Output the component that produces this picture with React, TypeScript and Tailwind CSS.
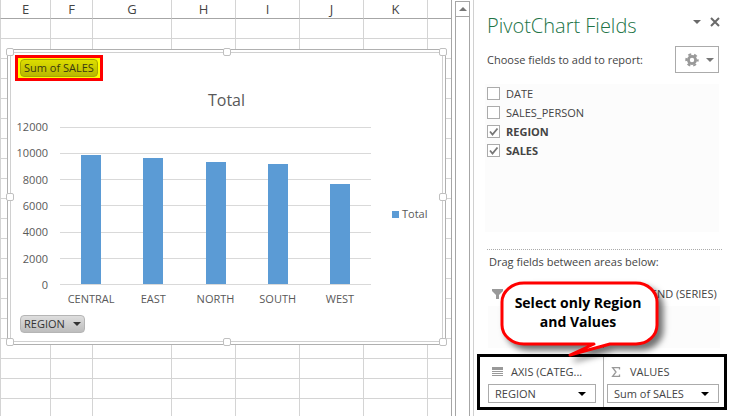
import { useState } from 'react';
import clsx from 'clsx';

const columns = [
  { name: 'E', width: 'w-[50px]' },
  { name: 'F', width: 'w-[42px]' },
  { name: 'G', width: 'w-[79px]' },
  { name: 'H', width: 'w-16' },
  { name: 'I', width: 'w-16' },
  { name: 'J', width: 'w-16' },
  { name: 'K', width: 'w-16' },
  { name: '', width: '' },
];

const rows = Array.from({ length: 20 }, (_, i) => i);

const AXIS_MAX = 12000;
const ticks = [12000, 10000, 8000, 6000, 4000, 2000, 0];

const totals = [
  { region: 'CENTRAL', value: 9860 },
  { region: 'EAST', value: 9640 },
  { region: 'NORTH', value: 9330 },
  { region: 'SOUTH', value: 9180 },
  { region: 'WEST', value: 7650 },
];

const handles = [
  '-left-[2px] -top-[2px]',
  'left-1/2 -ml-1 -top-[2px]',
  '-right-[2px] -top-[2px]',
  '-left-[2px] top-1/2 -mt-1',
  '-right-[2px] top-1/2 -mt-1',
  '-left-[2px] -bottom-[2px]',
  'left-1/2 -ml-1 -bottom-[2px]',
  '-right-[2px] -bottom-[2px]',
];

function Arrow({ className }: { className?: string }) {
  return (
    <svg viewBox="0 0 8 4" className={clsx('h-1 w-2 shrink-0', className)} fill="currentColor">
      <path d="M0 0h8L4 4z" />
    </svg>
  );
}

function Sheet() {
  return (
    <table className="w-full table-fixed border-separate border-spacing-0">
      <thead>
        <tr>
          {columns.map((col) => (
            <th
              key={col.name}
              className={clsx(
                'h-[19px] border-b border-l border-b-[#a6a6a6] border-l-[#d4d4d4] p-0 text-[13px] leading-4 font-normal text-[#444]',
                col.width
              )}
            >
              {col.name}
            </th>
          ))}
        </tr>
      </thead>
      <tbody>
        {rows.map((row) => (
          <tr key={row}>
            {columns.map((col) => (
              <td key={col.name} className="h-5 border-b border-l border-[#d4d4d4] p-0" />
            ))}
          </tr>
        ))}
      </tbody>
    </table>
  );
}

function PivotChart() {
  return (
    <div className="absolute top-[49px] right-[5px] left-[7px] border border-[#b0b0b0] bg-white p-[2px]">
      <div className="border border-[#d0d0d0] pb-2 pl-1 text-[11px] leading-4 text-[#595959]">
        <div className="mt-[2px] inline-flex h-[26px] items-center border-3 border-[#ff0000] bg-[#ffff00] px-[2px] align-top">
          <button className="h-[18px] rounded border border-[#a8a800] bg-linear-to-b from-[#dddd00] to-[#b8b800] px-[3px] leading-4 whitespace-nowrap text-[#3a3a10]">
            Sum of SALES
          </button>
        </div>

        <h2 className="mt-[7px] -ml-1 text-center text-[16px] leading-6">Total</h2>

        <div className="mt-[7px] flex">
          <div className="flex w-[33px] flex-col justify-between text-right">
            {ticks.map((tick) => (
              <span key={tick} className="leading-4">
                {tick}
              </span>
            ))}
          </div>

          <div className="ml-3 flex-1 py-2">
            <div className="relative h-[158px]">
              <div className="flex h-full flex-col justify-between">
                {ticks.map((tick) => (
                  <div key={tick} className="h-px bg-[#d9d9d9]" />
                ))}
              </div>
              <div className="absolute inset-x-0 top-0 bottom-px flex items-end">
                {totals.map((t) => (
                  <div key={t.region} className="flex h-full flex-1 items-end justify-center">
                    <div
                      className="w-5 bg-[#5b9bd5]"
                      style={{ height: `${(t.value / AXIS_MAX) * 100}%` }}
                    />
                  </div>
                ))}
              </div>
            </div>
          </div>

          <div className="flex w-[71px] items-center gap-[3px] pt-4 pl-[21px]">
            <span className="h-[7px] w-[7px] bg-[#5b9bd5]" />
            Total
          </div>
        </div>

        <div className="-mt-[2px] mr-[71px] ml-[45px] flex">
          {totals.map((t) => (
            <span key={t.region} className="flex-1 text-center">
              {t.region}
            </span>
          ))}
        </div>

        <button className="mt-2 ml-[5px] flex h-[18px] items-center gap-2 rounded border border-[#b5b5b5] bg-linear-to-b from-[#dedede] to-[#bdbdbd] px-[3px] text-[#333]">
          REGION
          <Arrow />
        </button>
      </div>

      {handles.map((place) => (
        <span
          key={place}
          className={clsx('absolute h-2 w-2 rounded-[2px] border border-[#c0c0c0] bg-white', place)}
        />
      ))}
    </div>
  );
}

function ScrollBar() {
  return (
    <div className="flex w-[22px] shrink-0 flex-col border-l border-[#a6a6a6] pt-px pr-[3px] pl-[3px]">
      <button
        aria-label="Scroll up"
        className="flex h-4 items-center justify-center border border-[#a6a6a6] text-[#777]"
      >
        <Arrow className="rotate-180" />
      </button>
      <div className="flex-1 border-x border-[#a6a6a6]" />
    </div>
  );
}

function FieldItem({ name, initial }: { name: string; initial: boolean }) {
  const [checked, setChecked] = useState(initial);

  return (
    <label className={clsx('flex h-[19px] items-center gap-[6px]', checked && 'font-bold')}>
      <span className="relative flex">
        <input
          type="checkbox"
          checked={checked}
          onChange={() => setChecked(!checked)}
          className="h-[13px] w-[13px] appearance-none border border-[#ababab] bg-white"
        />
        {checked && (
          <svg
            viewBox="0 0 13 13"
            className="pointer-events-none absolute inset-0"
            fill="none"
            stroke="#777"
            strokeWidth="1.8"
          >
            <path d="M3 6.5 5.5 9.5 10.5 3.5" />
          </svg>
        )}
      </span>
      {name}
    </label>
  );
}

function AreaHeading({ icon, label }: { icon: React.ReactNode; label?: string }) {
  return (
    <div className="flex h-6 items-center gap-2 pl-1 whitespace-nowrap">
      <span className="flex w-[11px] text-[#999]">{icon}</span>
      {label}
    </div>
  );
}

function AreaButton({ label }: { label: string }) {
  return (
    <button className="flex h-[19px] w-full items-center justify-between border border-[#ababab] bg-white pr-[9px] pl-[6px] whitespace-nowrap">
      {label}
      <Arrow className="text-black" />
    </button>
  );
}

const funnelIcon = (
  <svg viewBox="0 0 11 10" className="h-[10px] w-[11px]" fill="currentColor">
    <path d="M0 0h11v2L7 6v4H4V6L0 2z" />
  </svg>
);

const columnsIcon = (
  <svg viewBox="0 0 11 10" className="h-[10px] w-[11px]" fill="currentColor">
    <path d="M0 0h4v10H0zM5 0h1v10H5zM7 0h1v10H7zM9 0h1v10H9z" />
  </svg>
);

const rowsIcon = (
  <svg viewBox="0 0 11 10" className="h-[10px] w-[11px]" fill="currentColor">
    <path d="M0 0h11v3H0zM0 4h11v1H0zM0 6h11v1H0zM0 8h11v1H0z" />
  </svg>
);

const sigmaIcon = (
  <svg viewBox="0 0 11 10" className="h-[10px] w-[11px]" fill="none" stroke="currentColor">
    <path d="M8.5 2.5v-2h-7L5 5 1.500 9.500h7v-2" strokeWidth="1.3" />
  </svg>
);

function Callout() {
  return (
    <div className="absolute top-[280px] left-[24px] h-20 w-[170px]">
      <svg
        viewBox="0 0 170 80"
        className="absolute inset-0 overflow-visible drop-shadow-[5px_5px_3px_rgba(0,0,0,0.55)]"
      >
        <path
          d="M26 3H138A21 19 0 0 1 159 22V45A21 19 0 0 1 138 64H112L72 75 96 64H26A22 19 0 0 1 4 45V22A22 19 0 0 1 26 3Z"
          fill="#fff"
          stroke="#ff0000"
          strokeWidth="3"
          strokeLinejoin="round"
        />
      </svg>
      <p className="relative w-[160px] pt-[13px] text-center text-[14px] leading-[19px] font-bold whitespace-nowrap text-black">
        Select only Region
        <br />
        and Values
      </p>
    </div>
  );
}

function FieldsPane() {
  return (
    <aside className="relative flex w-[258px] shrink-0 flex-col border-l border-[#d0d0d0] text-[11px] leading-4 text-[#444]">
      <header className="flex items-center pt-3 pr-[11px] pl-[13px]">
        <h1 className="flex-1 text-[20px] leading-7 font-light whitespace-nowrap text-[#217346]">
          PivotChart Fields
        </h1>
        <div className="-mt-2 flex items-center gap-[9px] text-[#6a6a6a]">
          <button aria-label="Pane options">
            <Arrow />
          </button>
          <button aria-label="Close">
            <svg viewBox="0 0 10 10" className="h-[10px] w-[10px]" stroke="currentColor" strokeWidth="2">
              <path d="M1 1l8 8M9 1l-8 8" />
            </svg>
          </button>
        </div>
      </header>

      <div className="mt-[6px] flex items-center justify-between pr-3 pl-[13px]">
        <span className="whitespace-nowrap">Choose fields to add to report:</span>
        <button
          aria-label="Tools"
          className="flex h-[27px] w-11 items-center justify-between border border-[#ababab] pr-1 pl-[9px] text-[#777]"
        >
          <svg viewBox="0 0 14 14" className="h-[14px] w-[14px]" fill="none" stroke="#999">
            <circle cx="7" cy="7" r="3.6" strokeWidth="2.8" />
            <circle cx="7" cy="7" r="5.7" strokeWidth="2" strokeDasharray="3 2.97" strokeDashoffset="1.5" />
          </svg>
          <Arrow />
        </button>
      </div>

      <div className="mt-[11px] mr-3 ml-[11px] h-[148px] bg-[#fcfcfc] pl-[2px]">
        <FieldItem name="DATE" initial={false} />
        <FieldItem name="SALES_PERSON" initial={false} />
        <FieldItem name="REGION" initial={true} />
        <FieldItem name="SALES" initial={true} />
      </div>

      <div className="mt-[17px] mr-[9px] ml-[13px] border-t border-dotted border-[#ababab]" />
      <p className="mt-1 ml-[15px]">Drag fields between areas below:</p>

      <div className="mt-3 mr-[11px] ml-[14px] grid grid-cols-[116px_1fr]">
        <div className="border-r border-[#ababab] pr-[5px]">
          <AreaHeading icon={funnelIcon} />
          <div className="h-[42px] bg-[#fcfcfc]" />
        </div>
        <div className="pl-1">
          <AreaHeading icon={columnsIcon} label="LEGEND (SERIES)" />
          <div className="h-[42px] bg-[#fcfcfc]" />
        </div>
      </div>

      <div className="mt-[6px] mr-1 ml-[3px] grid grid-cols-[116px_1fr] border-3 border-black pr-[5px] pl-2">
        <div className="h-[50px] border-r border-[#ababab] pt-[3px] pr-[7px]">
          <AreaHeading icon={rowsIcon} label="AXIS (CATEG..." />
          <AreaButton label="REGION" />
        </div>
        <div className="pt-[3px] pl-[3px]">
          <AreaHeading icon={sigmaIcon} label="VALUES" />
          <AreaButton label="Sum of SALES" />
        </div>
      </div>

      <Callout />
    </aside>
  );
}

export default function App() {
  return (
    <div className="flex h-screen overflow-hidden bg-white font-['Open_Sans','Noto_Sans',sans-serif]">
      <main className="relative min-w-0 flex-1">
        <Sheet />
        <PivotChart />
      </main>
      <ScrollBar />
      <FieldsPane />
    </div>
  );
}
